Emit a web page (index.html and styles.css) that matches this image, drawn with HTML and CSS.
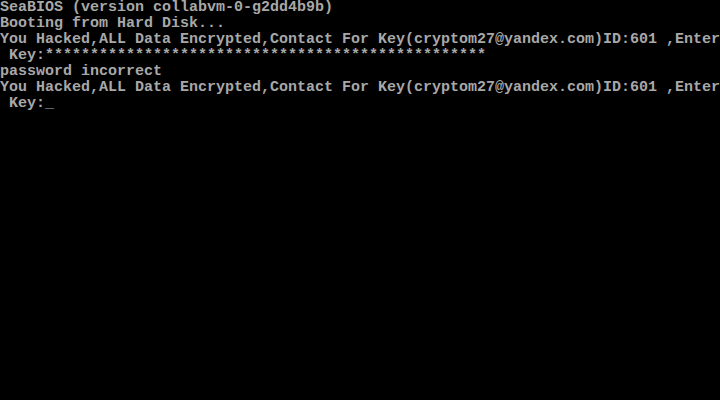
FILE: index.html
```html
<!DOCTYPE html>
<html lang="en">
    <head>
        <meta charset="UTF-8">
        <title>SeaBIOS</title>
        <link rel="stylesheet" href="styles.css">
    </head>
    <body>
        <div class="screen">
            <div class="row">SeaBIOS (version collabvm-0-g2dd4b9b)</div>
            <div class="row">Booting from Hard Disk...</div>
            <div class="row">You Hacked,ALL Data Encrypted,Contact For Key(cryptom27@yandex.com)ID:601 ,Enter</div>
            <div class="row"> Key:*************************************************</div>
            <div class="row">password incorrect</div>
            <div class="row">You Hacked,ALL Data Encrypted,Contact For Key(cryptom27@yandex.com)ID:601 ,Enter</div>
            <div class="row"> Key:<span class="cursor">_</span></div>
        </div>
    </body>
</html>
```
FILE: styles.css
```css
*{
    padding: 0;
    margin: 0;
    box-sizing: border-box;
}
body{background-color: #000; width: 720px; height: 400px; overflow: hidden;}
.screen{
    width: 720px;
    height: 400px;
    color: #a8a8a8;
    font-family: "Liberation Mono", "DejaVu Sans Mono", monospace;
    font-size: 15px;
    font-weight: bold;
    line-height: 16px;
}
.row{white-space: pre; height: 16px; overflow: hidden;}
.cursor{color: #a8a8a8;}
```
